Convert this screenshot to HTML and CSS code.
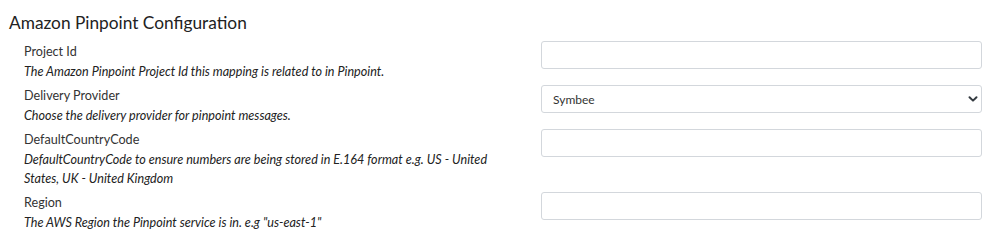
FILE: index.html
```html
<!DOCTYPE html>
<html>
<head>
<meta charset="utf-8">
<link rel="stylesheet" href="styles.css">
</head>
<body>
<section class="panel">
  <h2 class="title">Amazon Pinpoint Configuration</h2>
  <div class="field">
    <div class="info">
      <div class="label">Project Id</div>
      <div class="desc">The Amazon Pinpoint Project Id this mapping is related to in Pinpoint.</div>
    </div>
    <div class="control"><input class="input" type="text"></div>
  </div>
  <div class="field">
    <div class="info">
      <div class="label">Delivery Provider</div>
      <div class="desc">Choose the delivery provider for pinpoint messages.</div>
    </div>
    <div class="control">
      <select class="input select"><option>Symbee</option></select>
      <svg class="chev" width="10" height="8" viewBox="0 0 10 8"><path d="M1.5 2.2 L5 5.6 L8.5 2.2" fill="none" stroke="#343a40" stroke-width="2" stroke-linecap="round" stroke-linejoin="round"/></svg>
    </div>
  </div>
  <div class="field">
    <div class="info">
      <div class="label">DefaultCountryCode</div>
      <div class="desc">DefaultCountryCode to ensure numbers are being stored in E.164 format e.g. US - United States, UK - United Kingdom</div>
    </div>
    <div class="control"><input class="input" type="text"></div>
  </div>
  <div class="field">
    <div class="info">
      <div class="label">Region</div>
      <div class="desc">The AWS Region the Pinpoint service is in. e.g "us-east-1"</div>
    </div>
    <div class="control"><input class="input" type="text"></div>
  </div>
</section>
</body>
</html>
```
FILE: styles.css
```css
* { box-sizing: border-box; }
body {
  margin: 0;
  background: #fff;
  font-family: Lato, "Open Sans", sans-serif;
  color: #333;
}
.panel {
  padding: 11px 18px 0 9px;
}
.title {
  margin: 0 0 6px 0;
  font-size: 17.3px;
  font-weight: 400;
  line-height: 24px;
  color: #222;
}
.field {
  display: grid;
  grid-template-columns: 487px 441px;
  column-gap: 30px;
  padding-left: 15px;
  margin-bottom: 4px;
}
.info {
  padding-top: 1px;
}
.label {
  font-size: 12.6px;
  line-height: 20px;
  color: #333;
}
.desc {
  font-size: 12.6px;
  font-style: italic;
  line-height: 19px;
  color: #222;
}
.control {
  position: relative;
}
.input {
  display: block;
  width: 100%;
  height: 28px;
  border: 1px solid #d3d7dc;
  border-radius: 3px;
  background: #fff;
  font-family: inherit;
  font-size: 12px;
  color: #333;
  padding: 0 11px;
  outline: none;
}
.select {
  appearance: none;
  -webkit-appearance: none;
}
.chev {
  position: absolute;
  right: 4px;
  top: 10px;
  pointer-events: none;
}
```
